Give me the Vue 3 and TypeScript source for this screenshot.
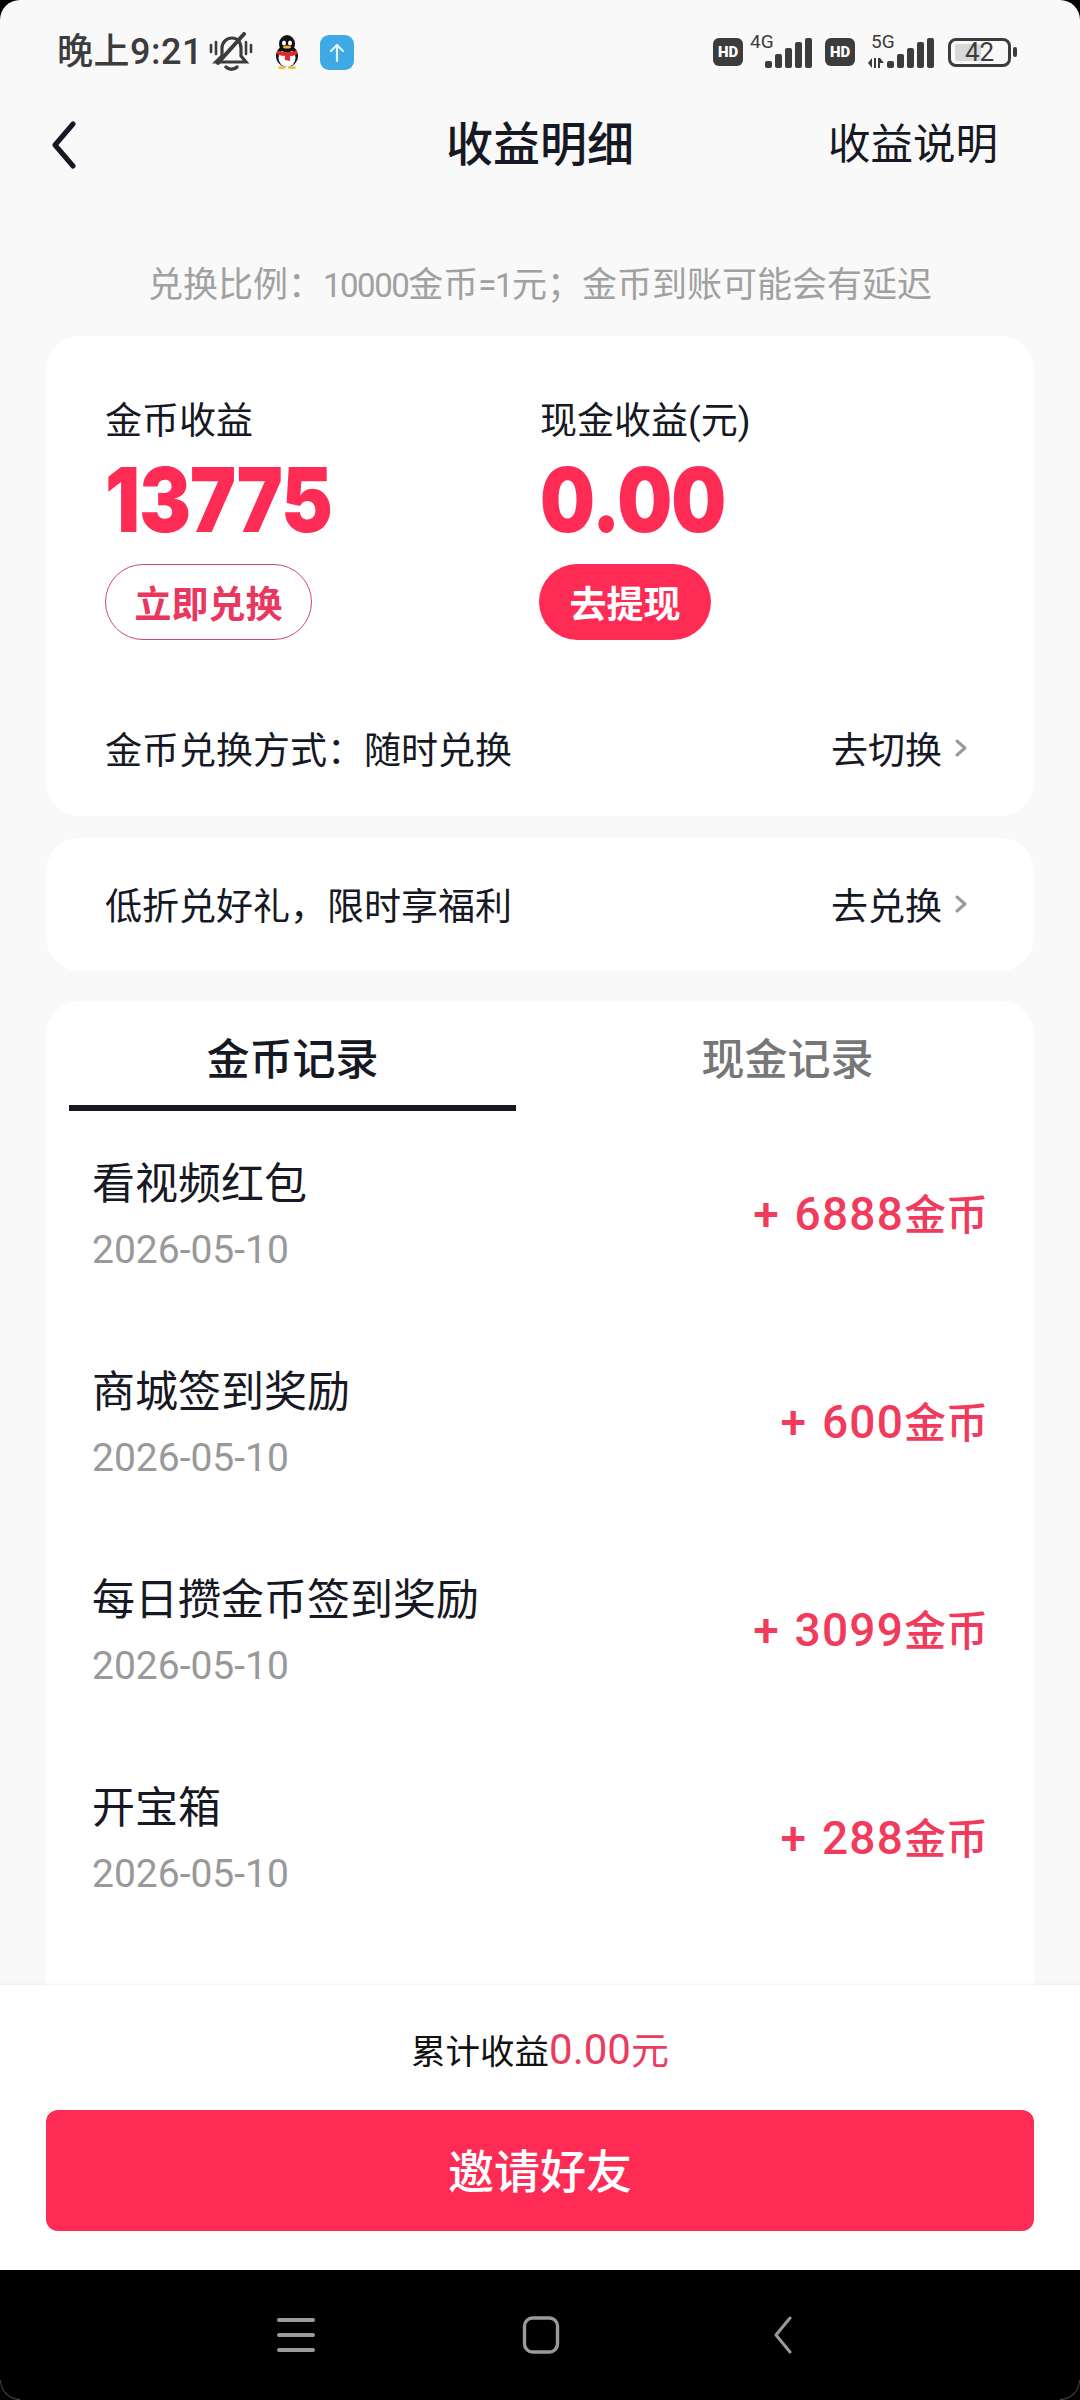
<script setup lang="ts">
interface Rec { title: string; date: string; amount: string }
const records: Rec[] = [
  { title: '看视频红包', date: '2026-05-10', amount: '+ 6888' },
  { title: '商城签到奖励', date: '2026-05-10', amount: '+ 600' },
  { title: '每日攒金币签到奖励', date: '2026-05-10', amount: '+ 3099' },
  { title: '开宝箱', date: '2026-05-10', amount: '+ 288' },
]
const barHeights = [7, 14, 20, 26, 30]
</script>

<template>
  <div class="screen">
    <div class="page">
      <main class="scroll">
        <div class="status">
          <div class="status-left">
            <span class="time">晚上9:21</span>
            <svg class="bell" width="44" height="40" viewBox="0 0 44 40" fill="none" stroke="#3c3c3c" stroke-width="3.4" stroke-linecap="round">
              <path d="M7 30h30l-5-6v-8c0-6-4-10-9-10s-10 4-10 10v8z" stroke-width="3.2" />
              <path d="M17 35c3 3 8 3 11 0" stroke-width="3.5" />
              <path d="M9 31 35 2" stroke-width="4" />
              <path d="M2 13v7M7 10v12M37 10v12M42 13v7" stroke-width="2.6" />
            </svg>
            <svg class="qq" width="26" height="34" viewBox="0 0 26 34">
              <ellipse cx="13" cy="21" rx="11" ry="11" fill="#111" />
              <ellipse cx="13" cy="23" rx="8.500" ry="9" fill="#fff" />
              <ellipse cx="13" cy="9" rx="8" ry="9" fill="#111" />
              <ellipse cx="10" cy="8" rx="2" ry="2.600" fill="#fff" />
              <ellipse cx="16" cy="8" rx="2" ry="2.600" fill="#fff" />
              <ellipse cx="13" cy="12" rx="4" ry="1.600" fill="#f0b429" />
              <path d="M3 15c6 3 14 3 20 0v4c-3 2-5 2-7 2v5l-5-1v-4c-3 0-6-1-8-2z" fill="#e02b2b" />
              <ellipse cx="8" cy="32.500" rx="4" ry="1.500" fill="#f0c040" />
              <ellipse cx="18" cy="32.500" rx="4" ry="1.500" fill="#f0c040" />
            </svg>
            <svg class="upload" width="34" height="35" viewBox="0 0 34 35">
              <rect width="34" height="35" rx="9" fill="#3fa9e6" />
              <path d="M17 26V10M11 16l6-6 6 6" fill="none" stroke="#e4f4ff" stroke-width="2.200" stroke-linecap="round" stroke-linejoin="round" />
            </svg>
          </div>
          <div class="status-right">
            <span class="hd">HD</span>
            <div class="sig sig-4g">
              <span class="net">4G</span>
              <div class="bars"><i v-for="h in barHeights" :key="h" :style="{ height: h + 'px' }"></i></div>
            </div>
            <span class="hd hd2">HD</span>
            <div class="sig sig-5g">
              <span class="net">5G</span>
              <svg class="arrows" width="17" height="11" viewBox="0 0 17 11"><path d="M0 6l4-5v10zM6 1h2v10H6zM10 1h2v10h-2zM12 1l4 5h-4z" fill="#3c3c3c" /></svg>
              <div class="bars"><i v-for="h in barHeights" :key="h" :style="{ height: h + 'px' }"></i></div>
            </div>
            <div class="battery">
              <span class="level"></span>
              <span class="pct">42</span>
            </div>
            <span class="tip"></span>
          </div>
        </div>

        <header class="nav">
          <svg class="back" width="26" height="48" viewBox="0 0 26 48" fill="none" stroke="#161823" stroke-width="5" stroke-linecap="round" stroke-linejoin="round">
            <path d="M22 3 4 24l18 21" />
          </svg>
          <h1>收益明细</h1>
          <span class="explain">收益说明</span>
        </header>

        <p class="ratio">兑换比例：<span class="ratio-n">10000</span>金币<span class="ratio-n">=1</span>元；金币到账可能会有延迟</p>

        <section class="card earn">
          <div class="cols">
            <div class="col">
              <div class="label">金币收益</div>
              <div class="num">13775</div>
              <div class="btn outline">立即兑换</div>
            </div>
            <div class="col">
              <div class="label">现金收益(元)</div>
              <div class="num">0.00</div>
              <div class="btn solid">去提现</div>
            </div>
          </div>
          <div class="line line-mode">
            <span>金币兑换方式：随时兑换</span>
            <span class="go">去切换<svg width="12" height="20" viewBox="0 0 12 20" fill="none" stroke="#999" stroke-width="3" stroke-linecap="round" stroke-linejoin="round"><path d="M2 3l8 7-8 7" /></svg></span>
          </div>
        </section>

        <section class="card gift line">
          <span>低折兑好礼，限时享福利</span>
          <span class="go">去兑换<svg width="12" height="20" viewBox="0 0 12 20" fill="none" stroke="#999" stroke-width="3" stroke-linecap="round" stroke-linejoin="round"><path d="M2 3l8 7-8 7" /></svg></span>
        </section>

        <section class="card records">
          <div class="tabs">
            <div class="tab active">金币记录</div>
            <div class="tab">现金记录</div>
          </div>
          <div v-for="r in records" :key="r.title" class="row">
            <div>
              <div class="row-title">{{ r.title }}</div>
              <div class="row-date">{{ r.date }}</div>
            </div>
            <div class="row-amount"><span class="amt-n">{{ r.amount }}</span>金币</div>
          </div>
        </section>
      </main>

      <footer class="foot">
        <div class="total">累计收益<em>0.00<small>元</small></em></div>
        <div class="invite">邀请好友</div>
      </footer>
    </div>

    <div class="sysnav">
      <svg width="38" height="38" viewBox="0 0 38 38" stroke="#9a9a9a" stroke-width="4" stroke-linecap="round"><path d="M2 4h34M2 19h34M2 34h34" /></svg>
      <svg width="38" height="38" viewBox="0 0 38 38" fill="none" stroke="#9a9a9a" stroke-width="3.400"><rect x="2.500" y="2" width="33" height="34" rx="8" /></svg>
      <svg width="20" height="38" viewBox="0 0 20 38" fill="none" stroke="#9a9a9a" stroke-width="3" stroke-linecap="round" stroke-linejoin="round"><path d="M17 2 3 19l14 17" /></svg>
      <span class="arc arc-l"></span>
      <span class="arc arc-r"></span>
    </div>
  </div>
</template>

<style>
html, body { margin: 0; background: #000; }
</style>

<style scoped>
* { box-sizing: border-box; }
.screen {
  width: 1080px; height: 2400px; background: #000; display: flex; flex-direction: column;
  font-family: Roboto, "Noto Sans CJK SC", sans-serif; color: #161823;
}
.page {
  height: 2270px; display: flex; flex-direction: column; background: #f9f9f9;
  border-radius: 20px 20px 0 0; overflow: hidden;
}
.scroll { flex: 1; overflow: hidden; min-height: 0; }
.status { height: 104px; display: flex; justify-content: space-between; align-items: flex-start; padding: 33px 63px 0 57px; }
.status-left { display: flex; align-items: center; height: 38px; }
.time { font-size: 36px; font-weight: 500; color: #3c3c3c; line-height: 38px; letter-spacing: 0.5px; }
.bell { margin-left: 6px; }
.qq { margin-left: 21px; }
.upload { margin-left: 20px; }
.status-right { display: flex; position: relative; height: 38px; align-items: flex-start; }
.hd {
  width: 30px; height: 28px; margin-top: 5px; background: #3c3c3c; border-radius: 6px; color: #fff;
  font-size: 15px; font-weight: 900; line-height: 28px; text-align: center;
}
.sig { position: relative; height: 36px; }
.sig-4g { width: 69px; }
.sig-5g { width: 79px; }
.hd2 { margin-left: 13px; }
.net { position: absolute; top: 0; font-size: 19px; line-height: 17px; color: #3c3c3c; }
.sig-4g .net { left: 7px; }
.sig-5g .net { left: 16px; }
.arrows { position: absolute; left: 13px; top: 24px; }
.bars { position: absolute; right: 0; top: 5px; height: 30px; display: flex; gap: 3px; align-items: flex-end; }
.bars i { width: 7px; background: #3c3c3c; border-radius: 2px; display: block; }
.battery {
  position: relative; width: 63px; height: 29px; margin: 5px 0 0 14px; border: 3px solid #3c3c3c; border-radius: 8px;
}
.level { position: absolute; left: 4px; top: 3px; bottom: 3px; width: 26px; background: #d8d8d8; border-radius: 2px; }
.pct { position: absolute; inset: 0; text-align: center; font-size: 26px; line-height: 23px; color: #3c3c3c; }
.tip { width: 4px; height: 10px; margin: 14px 0 0 2px; background: #3c3c3c; border-radius: 2px; }

.nav { height: 76px; display: flex; align-items: center; justify-content: space-between; padding: 0 82px 0 51px; position: relative; margin-top: 3px; }
.nav h1 { margin: 0; font-size: 47px; font-weight: 500; position: absolute; left: 446px; line-height: 76px; }
.explain { font-size: 42.500px; line-height: 76px; }

.ratio { margin: 78px 0 0; text-align: center; font-size: 35px; line-height: 50px; color: #a0a0a0; height: 50px; }
.ratio-n { font-size: 33px; letter-spacing: -1.500px; }

.card { margin: 0 46px; background: #fff; border-radius: 34px; }
.earn { margin-top: 25px; height: 480px; padding: 64px 59px 0; }
.cols { display: flex; }
.col { width: 437px; }
.label { font-size: 37px; line-height: 44px; }
.num {
  font-family: Inter, Roboto, sans-serif;
  font-size: 90px; font-weight: 900; color: #fe2c55; line-height: 92px; margin-top: 10px;
  transform: scaleX(0.86); transform-origin: left center; letter-spacing: -1px;
}
.btn { height: 76px; border-radius: 38px; display: inline-flex; align-items: center; justify-content: center; font-size: 37px; font-weight: 700; margin-top: 18px; }
.outline { width: 207px; border: 1.500px solid #d0476a; color: #e9375f; }
.solid { width: 172px; background: #fe2c55; color: #fff; margin-left: -1px; }
.line { display: flex; align-items: center; justify-content: space-between; font-size: 37px; color: #161823; }
.line-mode { margin-top: 86px; height: 44px; margin-right: 8px; }
.go { display: inline-flex; align-items: center; gap: 13px; }
.gift { margin-top: 22px; height: 133px; padding: 0 67px 2px 59px; }
.records { margin-top: 30px; height: 1200px; overflow: hidden; }
.tabs { display: flex; height: 110px; padding: 0 23px; }
.tab { flex: 1; text-align: center; font-size: 43px; font-weight: 500; line-height: 119px; color: #777; height: 110px; padding-left: 48px; }
.tab:first-child { flex: 0 0 447px; padding-left: 0; }
.tab.active { color: #161823; border-bottom: 6px solid #161823; }
.row { height: 208px; padding: 43px 46px 0 46px; display: flex; justify-content: space-between; align-items: flex-start; }
.row-title { font-size: 43px; line-height: 60px; }
.row-date { font-size: 39px; line-height: 50px; color: #999; margin-top: 11px; }
.row-amount { font-size: 42px; font-weight: 500; color: #f23a5d; line-height: 60px; margin-top: 30px; }
.amt-n { font-size: 46px; letter-spacing: 1.200px; word-spacing: 2px; }

.foot { height: 285px; flex: none; background: #fff; padding: 0 46px; box-shadow: 0 -1px 2px rgba(0,0,0,.05); position: relative; }
.total { text-align: center; font-size: 34.500px; line-height: 60px; padding-top: 35px; height: 125px; color: #111; }
.total em { font-style: normal; color: #ec3a60; font-size: 42px; }
.total small { font-size: 38px; }
.invite {
  height: 121px; background: #fe2c55; border-radius: 12px; color: #fff; font-size: 46px; font-weight: 500; padding-bottom: 5px;
  display: flex; align-items: center; justify-content: center;
}
.sysnav {
  flex: 1; background: #000; display: flex; align-items: flex-start; padding: 46px 0 0 277px; gap: 207px; position: relative;
}
.sysnav svg:nth-child(3) { margin-left: 6px; }
.arc { position: absolute; bottom: 0; width: 20px; height: 20px; border-bottom: 1px solid #444; }
.arc-l { left: 0; border-left: 1px solid #444; border-bottom-left-radius: 20px; }
.arc-r { right: 0; border-right: 1px solid #444; border-bottom-right-radius: 20px; }
</style>
